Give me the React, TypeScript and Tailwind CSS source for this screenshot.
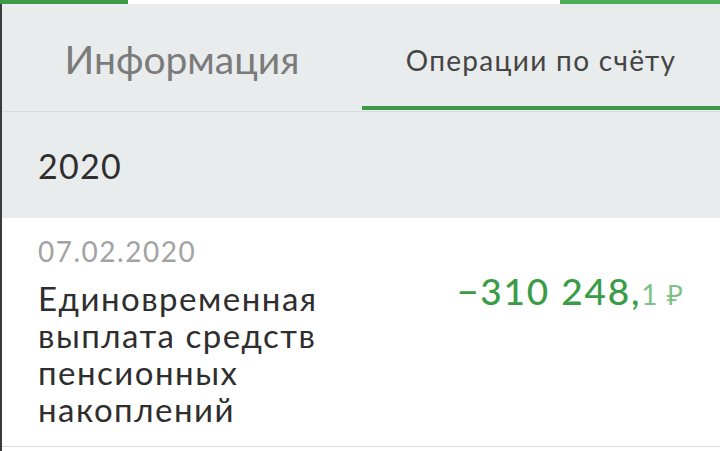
export default function App() {
  return (
    <div
      className="w-[720px] h-[451px] overflow-hidden bg-white flex flex-col"
      style={{ fontFamily: 'Lato, "Noto Sans", sans-serif' }}
    >
      {/* top strip of the previous screen */}
      <div className="h-[4px] flex shrink-0">
        <div className="w-[128px] bg-[#3f9a48]" />
        <div className="flex-1 bg-white" />
        <div className="w-[160px] bg-[#4caf58]" />
      </div>

      <div className="flex-1 flex flex-col border-l-2 border-[#3a3a3a]">
        {/* tabs */}
        <div className="h-[108px] bg-[#e9ecec] flex shrink-0 border-b border-[#d9dcdc]">
          <div className="w-[360px] flex items-center justify-center pt-[4px]">
            <span className="text-[39px] text-[#7b7b7b]">Информация</span>
          </div>
          <div className="flex-1 flex flex-col">
            <div className="flex-1 flex items-center justify-center pt-[10px]">
              <span className="text-[28px] tracking-[1.3px] text-[#454545]">Операции по счёту</span>
            </div>
            <div className="h-[4px] bg-[#3e9a4a] mb-[1px]" />
          </div>
        </div>

        {/* year header */}
        <div className="h-[106px] bg-[#e9ecec] flex items-center px-[36px] shrink-0">
          <span className="text-[34px] tracking-[1.3px] text-[#2e2e2e]">2020</span>
        </div>

        {/* operation row */}
        <div className="flex-1 flex flex-col border-b border-[#dcdcdc] mb-[4px] px-[36px] pt-[16px]">
          <div className="text-[28px] tracking-[1.5px] text-[#a3a3a3] leading-[34px]">07.02.2020</div>
          <div className="flex justify-between items-start mt-[12px]">
            <div className="text-[33px] tracking-[1.5px] leading-[37px] text-[#2e2e2e] w-[320px]">
              Единовременная выплата средств пенсионных накоплений
            </div>
            <div className="-mt-[9px] leading-[40px] whitespace-nowrap">
              <span className="text-[37px] font-medium tracking-[1.8px] text-[#3a9c46]">−310 248,</span>
              <span className="text-[28px] tracking-[1px] text-[#7cc285]">1 ₽</span>
            </div>
          </div>
        </div>
      </div>
    </div>
  )
}
